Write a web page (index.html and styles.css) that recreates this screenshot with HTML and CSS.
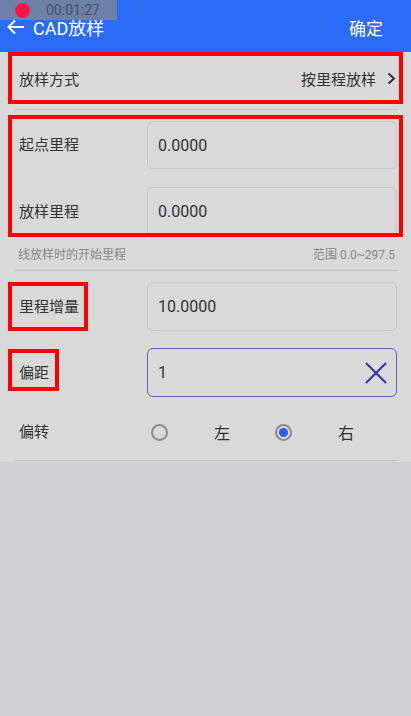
FILE: index.html
```html
<!DOCTYPE html>
<html lang="zh-CN">
<head>
    <meta charset="UTF-8">
    <meta name="viewport" content="width=device-width, initial-scale=1.0">
    <title>CAD放样</title>
    <link rel="stylesheet" href="styles.css">
</head>
<body>
    <div class="rec"><span class="rec-dot"></span>00:01:27</div>

    <header class="appbar">
        <svg class="back" width="18" height="16" viewBox="0 0 18 16"><path d="M17 8H2M8 1.5L1.5 8L8 14.5" fill="none" stroke="#fff" stroke-width="2"/></svg>
        <span class="title">CAD放样</span>
        <span class="ok">确定</span>
    </header>

    <main class="form">
        <div class="mark mark-wide">
            <div class="select-row">
                <span>放样方式</span>
                <span class="select-value">按里程放样
                    <svg width="9" height="13" viewBox="0 0 9 13"><path d="M1.5 1.5L7 6.5L1.5 11.5" fill="none" stroke="#333" stroke-width="2"/></svg>
                </span>
            </div>
        </div>
        <div class="divider"></div>

        <div class="mark mark-wide mark-pair">
            <div class="field">
                <span class="field-label">起点里程</span>
                <div class="input">0.0000</div>
            </div>
            <div class="field">
                <span class="field-label">放样里程</span>
                <div class="input">0.0000</div>
            </div>
        </div>

        <div class="hint">
            <span>线放样时的开始里程</span>
            <span>范围 0.0~297.5</span>
        </div>
        <div class="divider"></div>

        <div class="field field-step">
            <span class="mark mark-label mark-step">里程增量</span>
            <div class="input">10.0000</div>
        </div>

        <div class="field field-offset">
            <span class="mark mark-label mark-offset">偏距</span>
            <div class="input input-active">
                <span>1</span>
                <svg width="22" height="22" viewBox="0 0 22 22"><path d="M1 1L21 21M21 1L1 21" stroke="#3333a8" stroke-width="2"/></svg>
            </div>
        </div>

        <div class="field field-radio">
            <span class="field-label">偏转</span>
            <div class="options">
                <label class="option"><span class="radio"></span><span class="option-text">左</span></label>
                <label class="option"><span class="radio radio-on"></span><span class="option-text">右</span></label>
            </div>
        </div>
        <div class="divider divider-end"></div>
    </main>
</body>
</html>
```

FILE: styles.css
```css
body { margin: 0; background: #d0d0d2; font-family: Roboto, "Noto Sans CJK SC", sans-serif; color: #333; }

.rec { position: absolute; top: 0; left: 0; width: 117px; height: 20px; background: #6d80a8; color: #46526b; font-size: 14px; line-height: 20px; display: flex; align-items: center; }
.rec-dot { width: 15px; height: 15px; border-radius: 50%; background: #ff1744; margin: 0 16px 0 15px; }

.appbar { height: 52px; background: #2a6cf5; color: #fff; display: flex; align-items: center; padding: 2px 28px 0 7px; box-sizing: border-box; }
.back { margin-right: 8px; }
.title { font-size: 18px; }
.ok { margin-left: auto; font-size: 17px; }

.form { background: #d9d9d9; padding: 0 14px 1px 15px; font-size: 15px; }

.divider { height: 1px; background: #c2c2c2; margin-top: 5px; }
.divider-end { margin-top: 10px; }

.mark { border: 4px solid #ff0000; box-sizing: border-box; }
.mark-wide { margin: 0 -6px 0 -7px; }

.select-row { height: 44px; display: flex; align-items: center; justify-content: space-between; padding: 0 3px 0 7px; }
.select-value { display: flex; align-items: center; gap: 11px; }

.mark-pair { margin-top: 5px; height: 122px; overflow: hidden; padding: 2px 2px 0 3px; }
.mark-pair .field + .field { margin-top: 18px; }
.mark-pair .field:first-child .input { height: 48px; }

.field { display: flex; align-items: center; }
.field-label { width: 128px; padding-left: 4px; line-height: 22px; }

.input { flex: 1; height: 49px; box-sizing: border-box; border: 1px solid #c6c6c6; border-radius: 6px; padding: 0 10px; display: flex; align-items: center; font-size: 16px; }
.input-active { border-color: #6262b4; justify-content: space-between; padding-right: 9px; }

.hint { display: flex; justify-content: space-between; font-size: 12px; color: #888; line-height: 18px; padding: 9px 2px 1px 3px; }

.field-step { margin-top: 11px; align-items: flex-start; }
.field-offset { margin-top: 17px; align-items: flex-start; }

.mark-label { line-height: 22px; margin-left: -7px; padding: 10px 5px 9px 7px; height: 49px; }
.mark-step { width: 80px; margin-right: 59px; }
.mark-offset { width: 51px; height: 42px; margin-top: 1px; padding-top: 9px; margin-right: 88px; }

.field-radio { margin-top: 17px; height: 36px; }
.options { display: flex; }
.option { width: 124px; display: flex; align-items: center; }
.radio { width: 17px; height: 17px; box-sizing: border-box; border: 2px solid #8c8c8c; border-radius: 50%; margin-left: 4px; display: flex; align-items: center; justify-content: center; }
.radio-on::after { content: ""; width: 9px; height: 9px; border-radius: 50%; background: #2a5de6; }
.option-text { margin-left: 46px; font-size: 16px; }
```
